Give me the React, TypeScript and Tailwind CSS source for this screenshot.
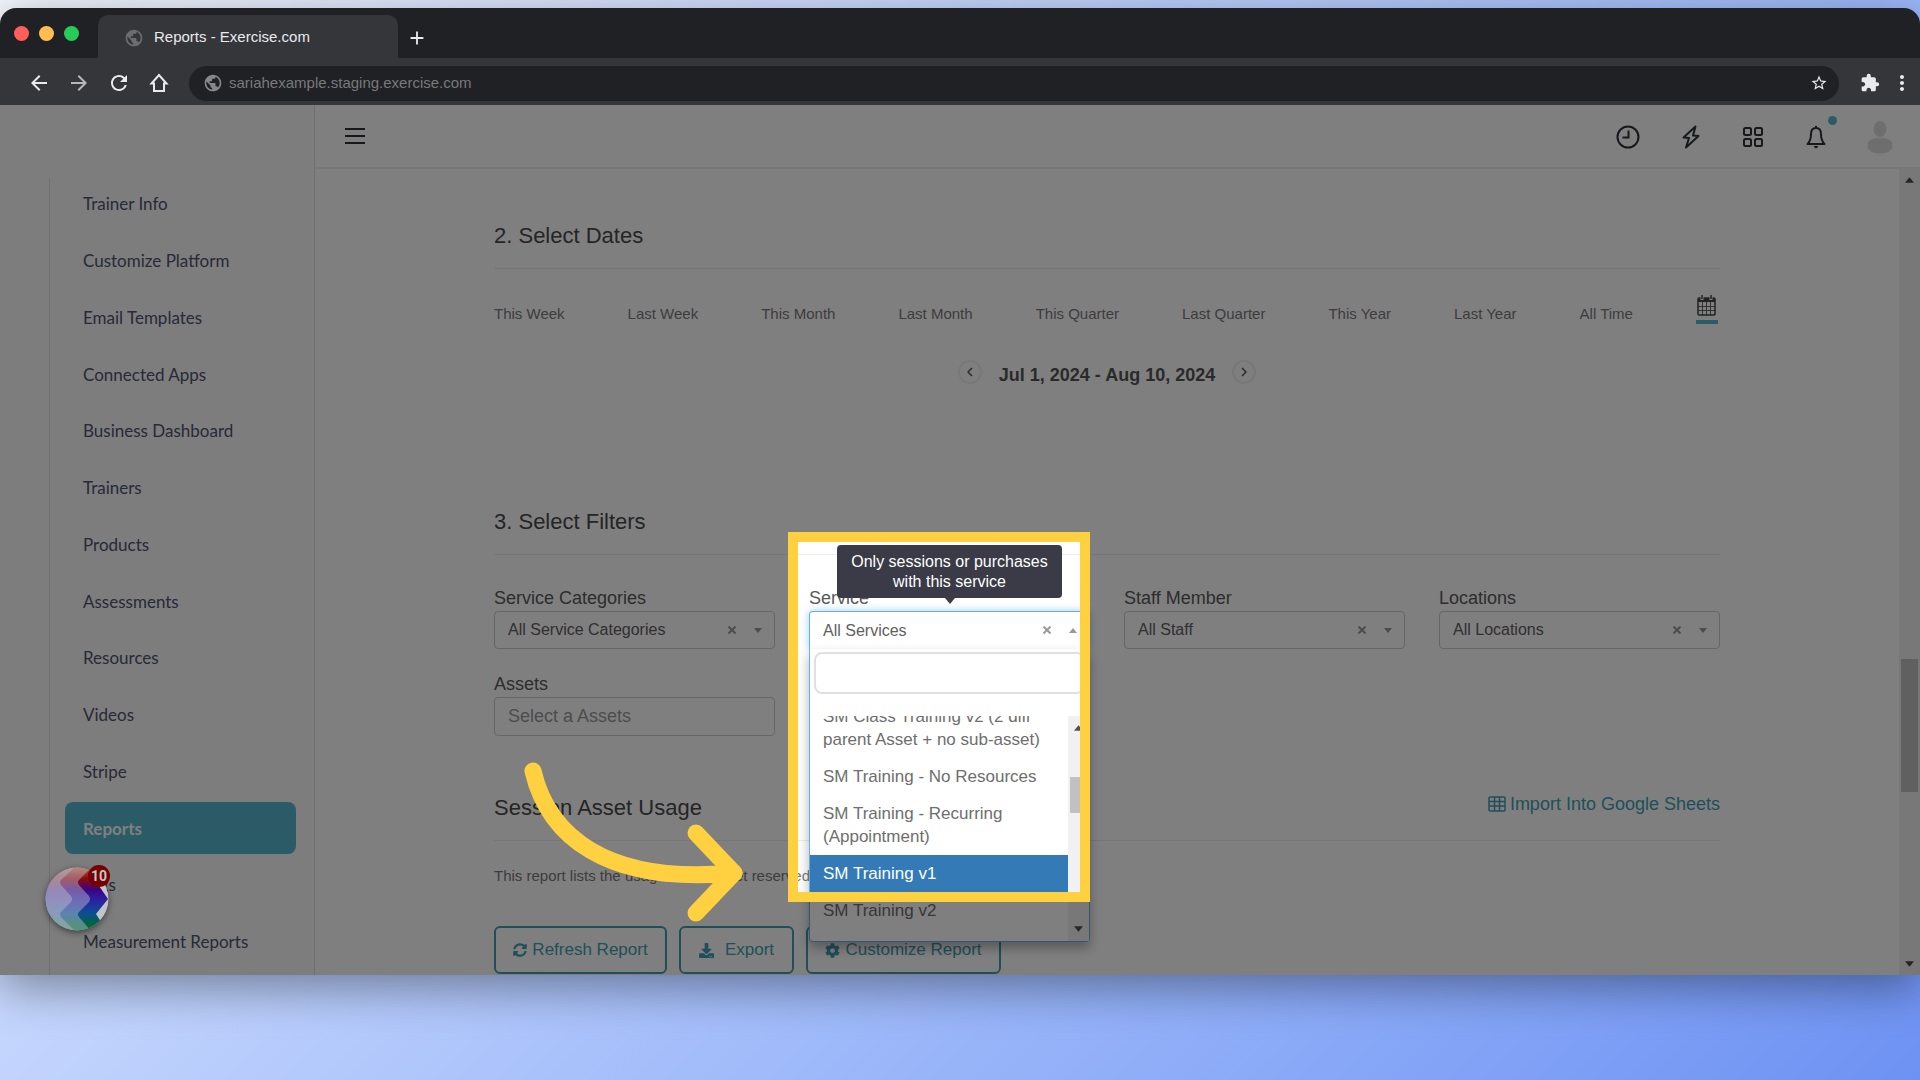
import { ReactNode } from "react";
import {
  MdAdd,
  MdArrowBack,
  MdArrowForward,
  MdExtension,
  MdMoreVert,
  MdPublic,
  MdRefresh,
  MdStarBorder,
} from "react-icons/md";
import { FaCog, FaDownload, FaSyncAlt } from "react-icons/fa";

const navItems = [
  "Trainer Info",
  "Customize Platform",
  "Email Templates",
  "Connected Apps",
  "Business Dashboard",
  "Trainers",
  "Products",
  "Assessments",
  "Resources",
  "Videos",
  "Stripe",
  "Reports",
  "Tags",
  "Measurement Reports",
];

const ranges = [
  "This Week",
  "Last Week",
  "This Month",
  "Last Month",
  "This Quarter",
  "Last Quarter",
  "This Year",
  "Last Year",
  "All Time",
];

const services = [
  "SM Class Training v2 (2 diff parent Asset + no sub-asset)",
  "SM Training - No Resources",
  "SM Training - Recurring (Appointment)",
  "SM Training v1",
  "SM Training v2",
];

function Triangle({ up = false, className = "" }: { up?: boolean; className?: string }) {
  return (
    <svg viewBox="0 0 10 6" className={className} fill="currentColor" aria-hidden="true">
      <path d={up ? "M0 6L5 0L10 6Z" : "M0 0L5 6L10 0Z"} />
    </svg>
  );
}

function BrowserBar() {
  return (
    <div className="bg-[#202124] text-[#e8eaed]">
      <div className="flex h-[50px] items-end">
        <div className="flex h-full w-[98px] items-center gap-[10px] pl-[14px]">
          <span className="size-[15px] rounded-full bg-[#ff5f5a]" />
          <span className="size-[15px] rounded-full bg-[#ffbe4f]" />
          <span className="size-[15px] rounded-full bg-[#27cb58]" />
        </div>
        <div className="flex h-[43px] w-[300px] items-center gap-[10px] rounded-t-[10px] bg-[#35363a] pt-[2px] pl-[26px] text-[15px]">
          <MdPublic className="size-[20px] text-[#6b6d70]" />
          <span>Reports - Exercise.com</span>
        </div>
        <button type="button" aria-label="New tab" className="flex h-[43px] items-center pt-[2px] pl-[8px]">
          <MdAdd className="size-[22px]" />
        </button>
      </div>
      <div className="flex h-[47px] items-center bg-[#35363a] pt-[3px] pr-[6px]">
        <div className="flex w-[189px] items-center gap-[16px] pl-[27px]">
          <button type="button" aria-label="Back"><MdArrowBack className="size-[24px]" /></button>
          <button type="button" aria-label="Forward"><MdArrowForward className="size-[24px] text-[#b5b7ba]" /></button>
          <button type="button" aria-label="Reload"><MdRefresh className="size-[24px]" /></button>
          <button type="button" aria-label="Home">
            <svg viewBox="0 0 24 24" className="size-[24px]" fill="none" stroke="currentColor" strokeWidth="2">
              <path d="M4.5 12.5L12 4L19.5 12.5H17V20H7V12.5Z" />
            </svg>
          </button>
        </div>
        <div className="flex h-[35px] flex-1 items-center gap-[6px] rounded-full bg-[#202124] pr-[11px] pl-[14px]">
          <MdPublic className="size-[20px] text-[#85878a]" />
          <input
            aria-label="Address"
            readOnly
            value="sariahexample.staging.exercise.com"
            className="min-w-0 flex-1 bg-transparent text-[15px] text-[#77797c] outline-none"
          />
          <MdStarBorder className="size-[18px]" />
        </div>
        <MdExtension className="ml-[21px] size-[20px]" />
        <MdMoreVert className="ml-[10px] size-[24px]" />
      </div>
    </div>
  );
}

function Launcher() {
  return (
    <div className="absolute bottom-[44px] left-[45px] z-30 size-[64px]">
      <svg viewBox="0 0 64 64" className="size-full rounded-full drop-shadow-[0_2px_3px_rgba(0,0,0,0.5)]">
        <defs>
          <linearGradient id="ribbon" x1="0" y1="0" x2="0" y2="1">
            <stop offset="0" stopColor="#a85a38" />
            <stop offset="0.18" stopColor="#8e0a08" />
            <stop offset="0.36" stopColor="#3a0484" />
            <stop offset="0.52" stopColor="#2a22a0" />
            <stop offset="0.72" stopColor="#0c4e94" />
            <stop offset="0.9" stopColor="#00663c" />
          </linearGradient>
          <clipPath id="disc">
            <circle cx="32" cy="32" r="31.5" />
          </clipPath>
        </defs>
        <g clipPath="url(#disc)">
          <rect width="64" height="64" fill="#c4c4c6" />
          <path d="M0 0H56L52 16L63 32L51 47L62 64H0Z" fill="url(#ribbon)" />
          <path d="M0 0H47L34 13Q32 15 34 18L44 29Q46 32 44 35L34 45Q32 47 34 50L46 64H0Z" fill="#c0c4d4" fillOpacity="0.45" />
          <path d="M0 0H30L16 13Q14 15 16 18L26 29Q28 32 26 35L16 45Q14 47 16 50L30 64H0Z" fill="#b4b6c6" fillOpacity="0.5" />
        </g>
      </svg>
      <span className="absolute -top-[2px] left-[43px] flex size-[22px] items-center justify-center rounded-full bg-[#740000] font-[Roboto,sans-serif] text-[14px] font-bold text-[#c4c4c4]">
        10
      </span>
    </div>
  );
}

function Sidebar() {
  return (
    <nav className="flex w-[315px] shrink-0 flex-col border-r border-[#dedede] bg-[#fafafa] pt-[73px] pl-[49px]">
      <ul className="flex flex-1 flex-col justify-between border-l border-[#dedede] pr-[18px] pb-[7px] pl-[15px] font-[Lato,sans-serif] text-[17px] text-[#50546e]">
        {navItems.map((item) => (
          <li key={item}>
            <a
              href="#"
              className={
                item === "Reports"
                  ? "flex h-[52px] items-center rounded-[8px] bg-[#54b6cc] pl-[18px] font-bold text-white"
                  : "flex h-[52px] items-center pl-[18px]"
              }
            >
              {item}
            </a>
          </li>
        ))}
      </ul>
    </nav>
  );
}

function TopBar() {
  return (
    <header className="flex h-[64px] shrink-0 items-center border-b-2 border-[#f0f0f0] pt-[2px] pr-[27px] pl-[30px] text-[#2c3038]">
      <button type="button" aria-label="Menu" className="mr-auto">
        <svg viewBox="0 0 20 18" className="h-[18px] w-[20px]" stroke="currentColor" strokeWidth="2">
          <path d="M0 1H20M0 8H20M0 15H20" />
        </svg>
      </button>
      <div className="flex items-center">
        <svg viewBox="0 0 24 24" className="size-[24px]" fill="none" stroke="currentColor" strokeWidth="2">
          <circle cx="12" cy="12" r="10.5" />
          <path d="M12.5 5.5V12.5H6.5" />
        </svg>
        <svg viewBox="0 0 18 24" className="ml-[42px] h-[24px] w-[18px]" fill="none" stroke="currentColor" strokeWidth="2" strokeLinejoin="round">
          <path d="M13.5 1.5L1.5 12.5L7 13L4 22.5L16.5 11L11 10.5Z" />
        </svg>
        <svg viewBox="0 0 22 22" className="ml-[42px] size-[22px]" fill="none" stroke="currentColor" strokeWidth="2">
          <rect x="2" y="2" width="7" height="7" rx="1.5" />
          <rect x="13" y="2" width="7" height="7" rx="1.5" />
          <rect x="2" y="13" width="7" height="7" rx="1.5" />
          <rect x="13" y="13" width="7" height="7" rx="1.5" />
        </svg>
        <div className="relative ml-[42px]">
          <svg viewBox="0 0 20 24" className="h-[24px] w-[20px]" fill="none" stroke="currentColor" strokeWidth="2" strokeLinejoin="round">
            <path d="M10 3C6.6 3 5 5.6 5 9C5 13.5 4 16.5 1.5 19H18.5C16 16.5 15 13.5 15 9C15 5.6 13.4 3 10 3Z" />
            <path d="M10 1V3" />
            <path d="M8 21.5H12L10 23Z" fill="currentColor" strokeWidth="1" />
          </svg>
          <span className="absolute -top-[9px] left-[22px] size-[9px] rounded-full bg-[#54b6cc]" />
        </div>
        <svg viewBox="0 0 26 34" className="ml-[41px] h-[34px] w-[26px]" fill="#dcdcdc">
          <ellipse cx="13" cy="9" rx="6.5" ry="8" />
          <path d="M0.5 26C0.5 20 5 18 13 18S25.5 20 25.5 26C25.5 31 20 33.5 13 33.5S0.5 31 0.5 26Z" />
        </svg>
      </div>
    </header>
  );
}

function SectionTitle({ children, action }: { children: ReactNode; action?: ReactNode }) {
  return (
    <div className="flex items-start justify-between border-b border-[#ececec] pb-[18px]">
      <h2 className="text-[22px] leading-[28px] text-[#4a4a4a]">{children}</h2>
      {action}
    </div>
  );
}

interface FilterProps {
  id: string;
  label: string;
  value: string;
  open?: boolean;
  children?: ReactNode;
}

function Filter({ id, label, value, open = false, children }: FilterProps) {
  return (
    <div className="relative">
      <label htmlFor={id} className="block text-[18px] leading-[24px] text-[#5a5a5a]">
        {label}
      </label>
      <div className="relative mt-px">
        <select
          id={id}
          className={
            open
              ? "h-[38px] w-full appearance-none rounded-t-[4px] border border-b-0 border-[#66afe9] bg-white pl-[13px] text-[16px] text-[#606060] shadow-[0_0_8px_rgba(102,175,233,0.6)] outline-none"
              : "h-[38px] w-full appearance-none rounded-[4px] border border-[#cccccc] bg-white pl-[13px] text-[16px] text-[#606060] outline-none"
          }
        >
          <option>{value}</option>
        </select>
        <div className="absolute inset-y-0 right-[13px] flex items-center gap-[18px] text-[#999999]">
          <button type="button" aria-label={`Clear ${label}`}>
            <svg viewBox="0 0 8 8" className="size-[8px]" stroke="currentColor" strokeWidth="2">
              <path d="M0.5 0.5L7.5 7.5M7.5 0.5L0.5 7.5" />
            </svg>
          </button>
          <Triangle up={open} className="h-[5px] w-[8px]" />
        </div>
      </div>
      {children}
    </div>
  );
}

function ServiceMenu() {
  return (
    <>
      <div className="absolute top-[63px] left-0 z-10 w-full rounded-b-[4px] border border-t-0 border-[#66afe9] bg-white px-[4px] pt-[3px] shadow-[0_6px_12px_rgba(0,0,0,0.3)]">
        <input
          type="text"
          aria-label="Search services"
          className="block h-[42px] w-full rounded-[8px] border-2 border-[#e0e0e0] px-[8px] text-[16px] outline-none"
        />
        <div className="-mx-[4px] mt-[22px] flex h-[225px] overflow-hidden">
          <ul className="-mt-[18px] flex-1 text-[17px] leading-[23px] text-[#6e6e6e]">
            {services.map((name) => (
              <li
                key={name}
                className={
                  name === "SM Training v1"
                    ? "bg-[#337ab7] py-[7px] pr-[8px] pl-[13px] text-white"
                    : "py-[7px] pr-[8px] pl-[13px]"
                }
              >
                {name}
              </li>
            ))}
          </ul>
          <div className="flex w-[21px] flex-col items-center justify-between bg-[#f1f1f1] py-[9px] text-[#505050]">
            <Triangle up className="h-[6px] w-[9px]" />
            <div className="mb-[68px] h-[36px] w-[17px] bg-[#c1c1c1]" />
            <Triangle className="h-[6px] w-[9px]" />
          </div>
        </div>
      </div>
      <div
        role="tooltip"
        className="absolute -top-[41px] left-[28px] z-10 w-[225px] rounded-[4px] bg-[#3a3b47] pt-[7px] pb-[6px] text-center text-[16px] leading-[20px] text-white"
      >
        Only sessions or purchases
        <br />
        with this service
        <Triangle className="absolute top-full left-[108px] h-[6px] w-[10px] text-[#3a3b47]" />
      </div>
      {/* spotlight: everything outside the frame is dimmed */}
      <div className="pointer-events-none absolute -top-[54px] -left-[21px] z-20 h-[370px] w-[302px] border-[10px] border-[#ffd140] shadow-[0_0_0_2400px_rgba(0,0,0,0.5)]" />
      <svg
        viewBox="0 0 240 170"
        className="pointer-events-none absolute top-[167px] -left-[293px] z-20 h-[170px] w-[240px]"
        fill="none"
        stroke="#ffd140"
        strokeWidth="17"
        strokeLinecap="round"
        strokeLinejoin="round"
      >
        <path d="M17 18C32 82 89 132 218 120" />
        <path d="M180 80L218 120L180 160" />
      </svg>
    </>
  );
}

function ReportPage() {
  return (
    <main className="flex flex-1">
      <div className="flex flex-1 justify-center">
        <div className="w-full max-w-[1226px] pt-[53px] pb-px">
          <SectionTitle>2. Select Dates</SectionTitle>
          <div className="mt-[26px] flex h-[29px] items-end justify-between pr-[2px] text-[15px] leading-[20px] text-[#7a7a7a]">
            {ranges.map((range) => (
              <button key={range} type="button">{range}</button>
            ))}
            <button type="button" aria-label="Custom range" className="border-b-4 border-[#54b6cc] pb-[4px] text-[#444444]">
              <svg viewBox="0 0 22 21" className="h-[21px] w-[22px]" fill="none" stroke="currentColor">
                <rect x="2" y="3" width="17" height="17" rx="1" strokeWidth="1.5" />
                <path d="M2 5H19" strokeWidth="4" />
                <path d="M6.5 7V20M10.5 7V20M14.5 7V20M2 11.5H19M2 15.5H19" strokeWidth="0.8" />
                <path d="M6 0V5M15 0V5" stroke="#ffffff" strokeWidth="3" />
                <path d="M6 0V4M15 0V4" strokeWidth="1.5" />
              </svg>
            </button>
          </div>
          <div className="mt-[36px] flex h-[25px] items-start justify-center gap-[17px] text-[#555555]">
            <button type="button" aria-label="Previous" className="flex size-[24px] items-center justify-center rounded-full border-2 border-[#f0f0f0]">
              <svg viewBox="0 0 6 10" className="h-[10px] w-[6px]" fill="none" stroke="currentColor" strokeWidth="1.5">
                <path d="M5 1L1 5L5 9" />
              </svg>
            </button>
            <span className="pt-[3px] text-[18px] leading-[24px] font-bold">Jul 1, 2024 - Aug 10, 2024</span>
            <button type="button" aria-label="Next" className="flex size-[24px] items-center justify-center rounded-full border-2 border-[#f0f0f0]">
              <svg viewBox="0 0 6 10" className="h-[10px] w-[6px]" fill="none" stroke="currentColor" strokeWidth="1.5">
                <path d="M1 1L5 5L1 9" />
              </svg>
            </button>
          </div>

          <div className="mt-[123px]">
            <SectionTitle>3. Select Filters</SectionTitle>
          </div>
          <div className="mt-[31px] grid grid-cols-4 gap-x-[34px] gap-y-[23px]">
            <Filter id="categories" label="Service Categories" value="All Service Categories" />
            <Filter id="service" label="Service" value="All Services" open>
              <ServiceMenu />
            </Filter>
            <Filter id="staff" label="Staff Member" value="All Staff" />
            <Filter id="locations" label="Locations" value="All Locations" />
            <div>
              <label htmlFor="assets" className="block text-[18px] leading-[24px] text-[#5a5a5a]">
                Assets
              </label>
              <input
                id="assets"
                type="text"
                placeholder="Select a Assets"
                className="mt-px block h-[39px] w-full rounded-[4px] border border-[#cccccc] bg-white px-[13px] text-[18px] outline-none placeholder:text-[#999999]"
              />
            </div>
          </div>

          <div className="mt-[58px]">
            <SectionTitle
              action={
                <a href="#" className="flex items-center gap-[4px] text-[18px] leading-[20px] text-[#409fb3]">
                  <svg viewBox="0 0 18 16" className="h-[16px] w-[18px]" fill="none" stroke="currentColor" strokeWidth="1.5">
                    <rect x="1" y="1" width="16" height="14" rx="1" />
                    <path d="M1 5.5H17M1 10H17M6.5 1V15M11.5 1V15" />
                  </svg>
                  Import Into Google Sheets
                </a>
              }
            >
              Session Asset Usage
            </SectionTitle>
          </div>
          <p className="mt-[25px] text-[15px] leading-[20px] text-[#7a7a7a]">
            This report lists the usage of the asset reserved
          </p>
          <div className="mt-[40px] flex gap-[12px] text-[17px] text-[#409fb3]">
            <button type="button" className="flex h-[48px] w-[173px] items-center justify-center gap-[5px] rounded-[6px] border-2 border-current">
              <FaSyncAlt className="size-[14px]" /> Refresh Report
            </button>
            <button type="button" className="flex h-[48px] w-[115px] items-center justify-center gap-[11px] rounded-[6px] border-2 border-current">
              <FaDownload className="size-[15px]" /> Export
            </button>
            <button type="button" className="flex h-[48px] w-[195px] items-center justify-center gap-[5px] rounded-[6px] border-2 border-current">
              <FaCog className="size-[15px]" /> Customize Report
            </button>
          </div>
        </div>
      </div>
      <div className="flex w-[21px] flex-col items-center justify-between bg-[#f1f1f1] py-[8px] text-[#484848]">
        <Triangle up className="h-[6px] w-[9px]" />
        <div className="mt-[306px] h-[133px] w-[17px] bg-[#c1c1c1]" />
        <Triangle className="h-[6px] w-[9px]" />
      </div>
    </main>
  );
}

export default function App() {
  return (
    <div className="min-h-screen bg-linear-135 from-[#f4f8ff] to-[#6e92f3] pt-[8px] font-['Liberation_Sans',Arial,sans-serif]">
      <div className="overflow-hidden rounded-t-[16px] shadow-[0_12px_48px_rgba(0,0,0,0.4)]">
        <BrowserBar />
        <div className="relative flex overflow-hidden bg-white">
          <Sidebar />
          <div className="flex flex-1 flex-col">
            <TopBar />
            <ReportPage />
          </div>
          <Launcher />
        </div>
      </div>
    </div>
  );
}
